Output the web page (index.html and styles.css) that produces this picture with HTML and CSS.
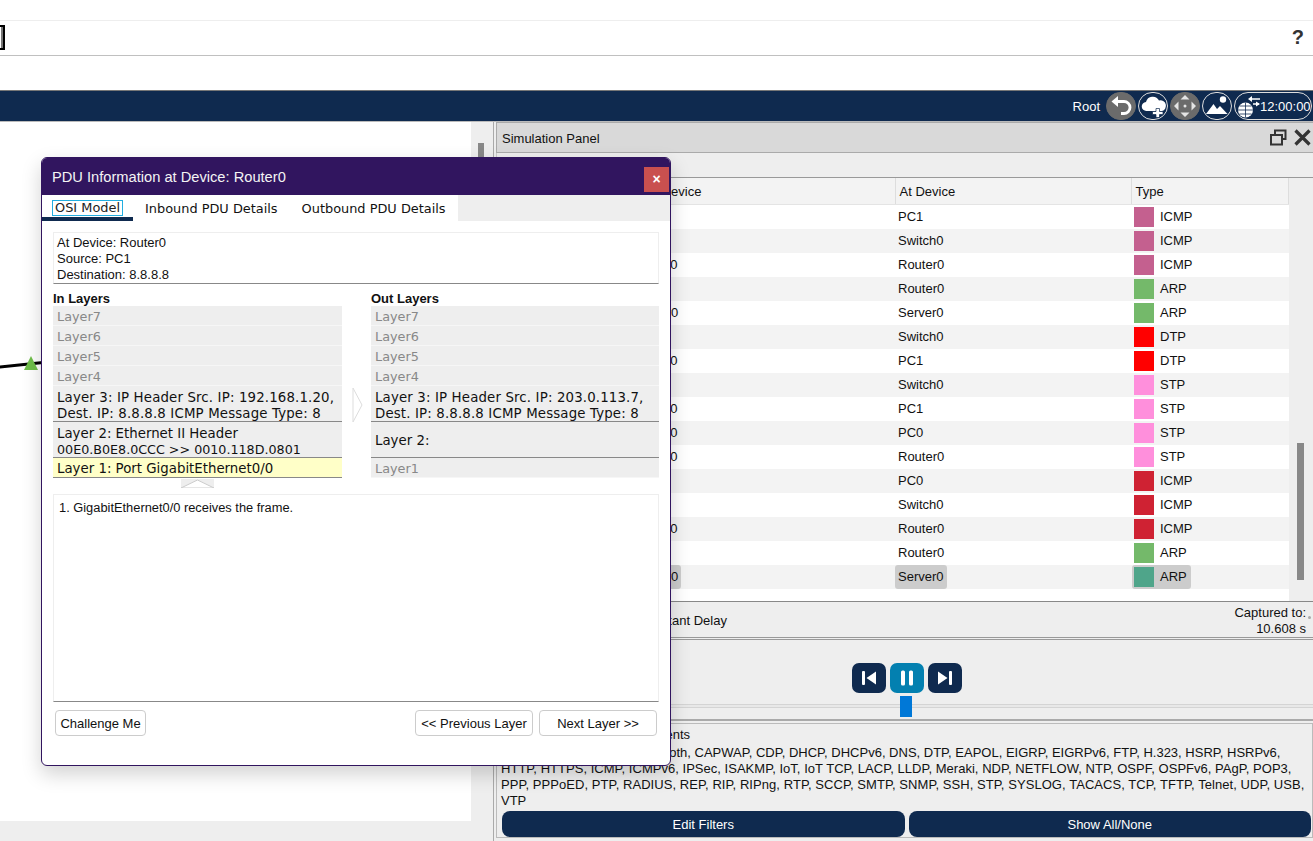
FILE: index.html
```html
<!DOCTYPE html>
<html>

<head>
    <title>PDU Information at Device: Router0</title>
    <link rel="stylesheet" href="styles.css">
</head>

<body>
    <div class="menu-gap"></div>
    <div class="tool-row">
        <div class="focus-box"></div>
        <div class="help">?</div>
    </div>
    <div class="white-gap"></div>

    <div class="blue-bar">
        <span class="root">Root</span>
        <span class="round filled">
            <svg width="30" height="28" viewBox="0 0 30 28"><path d="M8 9.500h10a6 6 0 0 1 0 12h-3" fill="none" stroke="#fff" stroke-width="2.800"/><path d="M12 4L5.500 9.500 12 15z" fill="#fff"/></svg>
        </span>
        <span class="round">
            <svg width="30" height="28" viewBox="0 0 30 28"><path d="M8.500 19a4.500 4.500 0 0 1-.500-9 7 7 0 0 1 13-1.500 5.300 5.300 0 0 1 3 10.500z" fill="#fff"/><path d="M18 16.500h3.500v3h3.500v3h-3.500v3H18v-3h-3.500v-3H18z" fill="#fff" stroke="#0f2a4f" stroke-width=".7"/></svg>
        </span>
        <span class="round filled">
            <svg width="30" height="28" viewBox="0 0 30 28" fill="#e4e4e4"><path d="M15 3l4.500 4.500h-9zM15 25l-4.500-4.500h9zM4 14l4.500-4.500v9zM26 14l-4.500 4.500v-9z"/><circle cx="15" cy="14" r="1.500"/></svg>
        </span>
        <span class="round">
            <svg width="30" height="28" viewBox="0 0 30 28"><path d="M4 22l7.500-10 3.500 5 3-3 7.500 8z" fill="#fff"/><circle cx="21" cy="7.500" r="3.200" fill="#fff"/></svg>
        </span>
        <span class="round clock">
            <svg width="24" height="28" viewBox="0 0 24 28"><circle cx="9.500" cy="18" r="7.500" fill="#fff"/><path d="M2 18h15M9.500 10.500v15M3.500 14h12M3.500 22h12" stroke="#0f2a4f" stroke-width=".8" fill="none"/><path d="M15 7h9M17 12h6" stroke="#fff" stroke-width="1.500"/><path d="M16 4l-4 3 4 3zM20 9.500l4 2.500-4 2.500z" fill="#fff"/></svg>
            12:00:00
        </span>
    </div>

    <div class="main">
        <div class="canvas">
            <div class="canvas-white">
                <div class="link"></div>
                <div class="link-mark"></div>
            </div>
            <div class="canvas-bottom"></div>
        </div>
        <div class="canvas-scroll"><div class="canvas-thumb"></div></div>

        <div class="panel">
            <div class="panel-title">
                <span class="panel-name">Simulation Panel</span>
                <span class="title-icons">
                    <svg width="17" height="17" viewBox="0 0 17 17" fill="none" stroke="#333" stroke-width="2"><path d="M5 5V1.500h10.500V10H12"/><rect x="1" y="6" width="11" height="9.500"/></svg>
                    <svg width="17" height="17" viewBox="0 0 17 17" stroke="#333" stroke-width="3.200"><path d="M1.500 1.500l14 14M15.500 1.500l-14 14"/></svg>
                </span>
            </div>
            <div class="list-label"></div>
            <div class="list-wrap">
                <table class="events">
                    <colgroup>
                        <col class="c-time"><col class="c-last"><col class="c-at"><col class="c-type">
                    </colgroup>
                    <tr class="head"><th></th><th>Last Device</th><th>At Device</th><th>Type</th></tr>
                    <tr><td></td><td>--</td><td>PC1</td><td><i class="sw pink"></i>ICMP</td></tr>
                    <tr class="alt"><td></td><td>PC1</td><td>Switch0</td><td><i class="sw pink"></i>ICMP</td></tr>
                    <tr><td></td><td>Switch0</td><td>Router0</td><td><i class="sw pink"></i>ICMP</td></tr>
                    <tr class="alt"><td></td><td>--</td><td>Router0</td><td><i class="sw green"></i>ARP</td></tr>
                    <tr><td></td><td>Router0</td><td>Server0</td><td><i class="sw green"></i>ARP</td></tr>
                    <tr class="alt"><td></td><td>--</td><td>Switch0</td><td><i class="sw red"></i>DTP</td></tr>
                    <tr><td></td><td>Switch0</td><td>PC1</td><td><i class="sw red"></i>DTP</td></tr>
                    <tr class="alt"><td></td><td>--</td><td>Switch0</td><td><i class="sw rose"></i>STP</td></tr>
                    <tr><td></td><td>Switch0</td><td>PC1</td><td><i class="sw rose"></i>STP</td></tr>
                    <tr class="alt"><td></td><td>Switch0</td><td>PC0</td><td><i class="sw rose"></i>STP</td></tr>
                    <tr><td></td><td>Switch0</td><td>Router0</td><td><i class="sw rose"></i>STP</td></tr>
                    <tr class="alt"><td></td><td>--</td><td>PC0</td><td><i class="sw crimson"></i>ICMP</td></tr>
                    <tr><td></td><td>PC0</td><td>Switch0</td><td><i class="sw crimson"></i>ICMP</td></tr>
                    <tr class="alt"><td></td><td>Switch0</td><td>Router0</td><td><i class="sw crimson"></i>ICMP</td></tr>
                    <tr><td></td><td>--</td><td>Router0</td><td><i class="sw green"></i>ARP</td></tr>
                    <tr class="alt"><td></td><td><span class="picked">Router0</span></td><td><span class="picked">Server0</span></td><td><span class="picked type"><i class="sw teal"></i>ARP</span></td></tr>
                </table>
                <div class="list-scroll"><div class="list-thumb"></div></div>
            </div>

            <div class="delay-row">
                <span class="delay">Constant Delay</span>
                <span class="captured">Captured to:<br>10.608 s</span>
            </div>

            <div class="play-row">
                <div class="play-buttons">
                    <span class="play-btn"><svg width="18" height="18" viewBox="0 0 18 18" fill="#fff"><rect x="2" y="2" width="3" height="14" rx="1"/><path d="M16 2.500v13L6.500 9z"/></svg></span>
                    <span class="play-btn on"><svg width="18" height="18" viewBox="0 0 18 18" fill="#fff"><rect x="3" y="1.500" width="4" height="15" rx="1.500"/><rect x="11" y="1.500" width="4" height="15" rx="1.500"/></svg></span>
                    <span class="play-btn"><svg width="18" height="18" viewBox="0 0 18 18" fill="#fff"><rect x="13" y="2" width="3" height="14" rx="1"/><path d="M2 2.500v13L11.500 9z"/></svg></span>
                </div>
                <div class="slider"><div class="slider-thumb"></div></div>
            </div>

            <div class="filters">
                <div class="filters-head">Event List Filters - Visible Events</div>
                <div class="filters-line one">ACL Filter, ARP, BGP, Bluetooth, CAPWAP, CDP, DHCP, DHCPv6, DNS, DTP, EAPOL, EIGRP, EIGRPv6, FTP, H.323, HSRP, HSRPv6,</div>
                <div class="filters-line two">HTTP, HTTPS, ICMP, ICMPv6, IPSec, ISAKMP, IoT, IoT TCP, LACP, LLDP, Meraki, NDP, NETFLOW, NTP, OSPF, OSPFv6, PAgP, POP3,</div>
                <div class="filters-line three">PPP, PPPoED, PTP, RADIUS, REP, RIP, RIPng, RTP, SCCP, SMTP, SNMP, SSH, STP, SYSLOG, TACACS, TCP, TFTP, Telnet, UDP, USB,</div>
                <div class="filters-line">VTP</div>
                <div class="filters-buttons">
                    <button>Edit Filters</button>
                    <button>Show All/None</button>
                </div>
            </div>
        </div>
    </div>

    <div class="dialog">
        <div class="dialog-title">
            <span>PDU Information at Device: Router0</span>
            <span class="dialog-close">×</span>
        </div>
        <div class="tabs">
            <div class="tab active"><span class="tab-focus">OSI Model</span></div>
            <div class="tab">Inbound PDU Details</div>
            <div class="tab">Outbound PDU Details</div>
            <div class="tabs-rest"></div>
        </div>
        <div class="dialog-body">
            <div class="info-box">
                At Device: Router0<br>
                Source: PC1<br>
                Destination: 8.8.8.8
            </div>
            <div class="layers">
                <div class="layer-col">
                    <div class="layer-head">In Layers</div>
                    <div class="layer off">Layer7</div>
                    <div class="layer off">Layer6</div>
                    <div class="layer off">Layer5</div>
                    <div class="layer off">Layer4</div>
                    <div class="layer big wide">Layer 3: IP Header Src. IP: 192.168.1.20, Dest. IP: 8.8.8.8 ICMP Message Type: 8</div>
                    <div class="layer big">Layer 2: Ethernet II Header<br><span class="mac">00E0.B0E8.0CCC &gt;&gt; 0010.118D.0801</span></div>
                    <div class="layer now">Layer 1: Port GigabitEthernet0/0</div>
                </div>
                <div class="layer-gap">
                    <svg width="12" height="36" viewBox="0 0 12 36"><path d="M1 1l9 17-9 17z" fill="#fff" stroke="#ddd"/></svg>
                </div>
                <div class="layer-col out">
                    <div class="layer-head">Out Layers</div>
                    <div class="layer off">Layer7</div>
                    <div class="layer off">Layer6</div>
                    <div class="layer off">Layer5</div>
                    <div class="layer off">Layer4</div>
                    <div class="layer big wide">Layer 3: IP Header Src. IP: 203.0.113.7, Dest. IP: 8.8.8.8 ICMP Message Type: 8</div>
                    <div class="layer big mid">Layer 2:</div>
                    <div class="layer off">Layer1</div>
                </div>
            </div>
            <div class="up-arrow">
                <svg width="33" height="9" viewBox="0 0 33 9"><rect width="33" height="9" fill="#eee"/><path d="M0 9L16.500 1 33 9z" fill="#fff" stroke="#ccc"/></svg>
            </div>
            <div class="desc-box">1. GigabitEthernet0/0 receives the frame.</div>
            <div class="dialog-buttons">
                <button class="btn challenge">Challenge Me</button>
                <span class="btn-space"></span>
                <button class="btn step">&lt;&lt; Previous Layer</button>
                <button class="btn step">Next Layer &gt;&gt;</button>
            </div>
        </div>
    </div>
</body>

</html>
```

FILE: styles.css
```css
* {
    box-sizing: border-box;
}

body {
    margin: 0;
    height: 841px;
    overflow: hidden;
    background-color: white;
    color: #111;
    font-family: "Liberation Sans", Arial, sans-serif;
    font-size: 13px;
    position: relative;
}

.menu-gap {
    height: 21px;
    border-bottom: 1px solid #eee;
}

.tool-row {
    height: 35px;
    border-bottom: 1px solid #c0c0c0;
    display: flex;
    align-items: center;
    justify-content: space-between;
}

.focus-box {
    width: 5px;
    height: 25px;
    margin-top: -1px;
    border: 2px solid black;
    border-left: none;
    background-color: white;
    box-shadow: inset -2px 0 0 #777;
}

.help {
    font-size: 20px;
    font-weight: bold;
    color: #333;
    margin-right: 9px;
    margin-top: -2px;
}

.white-gap {
    height: 34px;
}

.blue-bar {
    height: 32px;
    background-color: #0f2a4f;
    border-top: 1px solid #777;
    border-bottom: 1px solid #bbb;
    display: flex;
    align-items: center;
    justify-content: flex-end;
    gap: 2px;
    padding-right: 1px;
    color: white;
    font-size: 13px;
}

.root {
    margin-right: 4px;
}

.round {
    width: 30px;
    height: 28px;
    border: 1px solid #ddd;
    border-radius: 14px;
    display: flex;
    align-items: center;
    justify-content: center;
    flex-shrink: 0;
}

.round svg {
    flex-shrink: 0;
}

.round.filled {
    background-color: #6b6b6b;
    border-color: #6b6b6b;
}

.round.clock {
    width: 78px;
    justify-content: flex-start;
    padding-left: 1px;
}

.main {
    display: flex;
    height: 719px;
}

.canvas {
    width: 471px;
    display: flex;
    flex-direction: column;
}

.canvas-white {
    flex: 1;
    position: relative;
}

.canvas-bottom {
    height: 20px;
    background-color: #eee;
}

.link {
    position: absolute;
    left: -2px;
    top: 241px;
    width: 50px;
    height: 3px;
    background-color: black;
    transform: rotate(-6deg);
}

.link-mark {
    position: absolute;
    left: 24px;
    top: 234px;
    width: 0;
    height: 0;
    border-left: 7px solid transparent;
    border-right: 7px solid transparent;
    border-bottom: 14px solid #6fbf4a;
}

.canvas-scroll {
    width: 23px;
    background-color: #eee;
    border-right: 1px solid #aaa;
    padding: 21px 0 0 7px;
}

.canvas-thumb {
    width: 6px;
    height: 60px;
    background-color: #888;
}

.panel {
    flex: 1;
    padding-left: 2px;
    display: flex;
    flex-direction: column;
    background-color: #eee;
}

.panel-title {
    height: 31px;
    background-color: #d9d9d9;
    border: 1px solid #aaa;
    border-right: none;
    display: flex;
    align-items: center;
    justify-content: space-between;
    padding-left: 5px;
}

.panel-name {
    padding-top: 2px;
}

.title-icons {
    display: flex;
    gap: 7px;
    padding-right: 2px;
}

.list-label {
    height: 25px;
    background-color: #eee;
    border-bottom: 1px solid #999;
    border-left: 1px solid #ccc;
}

.list-wrap {
    height: 424px;
    display: flex;
    background-color: white;
    border-bottom: 1px solid #888;
    border-left: 1px solid #ccc;
}

.events {
    width: 792px;
    table-layout: fixed;
    border-collapse: collapse;
    align-self: flex-start;
}

.c-time {
    width: 132px;
}

.c-last {
    width: 266px;
}

.c-at {
    width: 236px;
}

.events th {
    height: 26px;
    padding: 1px 0 0 4px;
    font-weight: normal;
    text-align: left;
    background-color: #f3f3f3;
    border-right: 1px solid #ddd;
    border-bottom: 1px solid #e4e4e4;
}

.events td {
    height: 24px;
    line-height: 24px;
    padding: 0 0 0 3px;
    white-space: nowrap;
}

.events tr.alt td {
    background-color: #f3f3f3;
}

.sw {
    float: left;
    width: 20px;
    height: 20px;
    margin: 2px 6px 0 0;
}

.pink {
    background-color: #c4608f;
}

.green {
    background-color: #74b96a;
}

.red {
    background-color: #ff0000;
}

.rose {
    background-color: #ff8fdc;
}

.crimson {
    background-color: #cf2233;
}

.teal {
    background-color: #4fa58a;
}

.picked {
    display: inline-block;
    height: 24px;
    line-height: 24px;
    background-color: #cccccc;
    border-radius: 3px;
    padding: 0 3px;
    margin-left: -3px;
}

.picked.type {
    width: 59px;
    padding: 0 2px;
    margin-left: -2px;
}

.list-scroll {
    flex: 1;
    background-color: #eee;
    padding: 0 0 0 8px;
    display: flex;
    align-items: flex-end;
}

.list-thumb {
    width: 7px;
    height: 137px;
    margin-bottom: 21px;
    background-color: #888;
}

.delay-row {
    height: 38px;
    border-bottom: 3px double #999;
    display: flex;
    justify-content: space-between;
    padding-left: 142px;
    padding-right: 7px;
}

.delay {
    padding-top: 11px;
}

.captured {
    text-align: right;
    line-height: 16px;
    padding-top: 3px;
    position: relative;
}

.captured::after {
    content: "";
    position: absolute;
    right: -5px;
    top: 14px;
    width: 3px;
    height: 3px;
    border-radius: 50%;
    background-color: #aaa;
}

.play-row {
    height: 81px;
    border-bottom: 2px solid #aaa;
    display: flex;
    flex-direction: column;
    padding-top: 23px;
}

.play-buttons {
    display: flex;
    gap: 4px;
    margin-left: 356px;
}

.play-btn {
    width: 34px;
    height: 30px;
    background-color: #0f2a4f;
    border-radius: 7px;
    display: flex;
    align-items: center;
    justify-content: center;
}

.play-btn.on {
    background-color: #0380b0;
}

.slider {
    width: 100%;
    height: 4px;
    margin-top: 11px;
    background-color: #e8e8e8;
    border-top: 1px solid #d4d4d4;
    border-bottom: 1px solid #d4d4d4;
    position: relative;
}

.slider-thumb {
    position: absolute;
    left: 404px;
    top: -9px;
    width: 12px;
    height: 21px;
    background-color: #0078d7;
}

.filters {
    margin: 2px 0 3px 0;
    border: 1px solid #bbb;
    padding: 3px 1px 0 4px;
    height: 116px;
    flex: 1;
    line-height: 16px;
    white-space: nowrap;
}

.filters-head {
    height: 18px;
}

.filters-line.one {
    padding-left: 3px;
}

.filters-line.two {
    letter-spacing: 0.025px;
}

.filters-line.three {
    letter-spacing: 0.06px;
}

.filters-buttons {
    display: flex;
    gap: 4px;
    margin: 2px 0 0 1px;
}

.filters-buttons button {
    flex: 1;
    height: 26px;
    border: none;
    border-radius: 8px;
    background-color: #0f2a4f;
    color: white;
    font-family: inherit;
    font-size: 13px;
}

.dialog {
    position: absolute;
    left: 41px;
    top: 157px;
    width: 630px;
    height: 609px;
    background-color: white;
    border: 1px solid #31155f;
    border-radius: 6px;
    box-shadow: 0 8px 20px rgba(0, 0, 0, 0.18);
    display: flex;
    flex-direction: column;
}

.dialog-title {
    height: 37px;
    flex-shrink: 0;
    background-color: #31155f;
    color: #f4f4f4;
    font-size: 14.670px;
    border-radius: 5px 5px 0 0;
    display: flex;
    align-items: center;
    justify-content: space-between;
    padding: 0 1px 0 10px;
}

.dialog-close {
    width: 25px;
    height: 25px;
    margin-top: 9px;
    align-self: flex-start;
    background-color: #c9504f;
    color: white;
    font-size: 14px;
    font-weight: bold;
    text-align: center;
    line-height: 24px;
}

.tabs {
    height: 26px;
    flex-shrink: 0;
    display: flex;
    font-family: "DejaVu Sans", Verdana, sans-serif;
    font-size: 12.900px;
}

.tab {
    padding: 6px 12px 0;
}

.tab.active {
    width: 91px;
    padding: 6px 0 0 10px;
    border-bottom: 4px solid #0f2a4f;
}

.tab-focus {
    display: inline-block;
    width: 71px;
    height: 16px;
    line-height: 14px;
    margin-top: -1px;
    border: 1px solid #22aee0;
    text-align: center;
    color: #222;
    vertical-align: top;
    white-space: nowrap;
}

.tabs-rest {
    flex: 1;
    background-color: #eee;
}

.dialog-body {
    flex: 1;
    padding: 11px 11px 0;
    display: flex;
    flex-direction: column;
}

.info-box {
    height: 52px;
    border: 1px solid #eee;
    border-bottom: 1px solid #888;
    padding: 2px 3px;
    line-height: 16px;
}

.layers {
    display: flex;
}

.layer-col {
    width: 289px;
}

.layer-col.out {
    width: 288px;
}

.layer-gap {
    width: 29px;
    padding: 103px 0 0 10px;
}

.layer-head {
    height: 22px;
    padding-top: 7px;
    line-height: 15px;
    font-weight: bold;
}

.layer {
    height: 20px;
    padding: 1px 4px 0;
    background-color: #eee;
    font-family: "DejaVu Sans", Verdana, sans-serif;
    font-size: 13.330px;
    line-height: 20px;
    border-bottom: 1px solid #f6f6f6;
}

.layer.off {
    color: #888;
    font-size: 12.800px;
}

.layer.big {
    height: 36px;
    line-height: 16px;
    padding-top: 4px;
    border-bottom: 1px solid #888;
}

.layer.wide {
    letter-spacing: 0.150px;
}

.mac {
    font-size: 12.700px;
}

.layer.mid {
    line-height: 32px;
    padding-top: 3px;
}

.layer.now {
    background-color: #ffffc8;
    border-bottom: 1px solid #888;
}

.up-arrow {
    height: 16px;
    padding: 1px 0 0 128px;
    line-height: 0;
}

.desc-box {
    height: 208px;
    border: 1px solid #eee;
    border-bottom: 1px solid #888;
    padding: 5px 5px;
    font-size: 12.850px;
    line-height: 15px;
}

.dialog-buttons {
    display: flex;
    gap: 6px;
    padding: 8px 2px 0;
}

.btn-space {
    flex: 1;
}

.btn {
    height: 26px;
    background-color: white;
    border: 1px solid #ccc;
    border-radius: 4px;
    color: #111;
    font-family: inherit;
    font-size: 13px;
    padding: 0;
}

.challenge {
    width: 91px;
}

.step {
    width: 118px;
}
```
